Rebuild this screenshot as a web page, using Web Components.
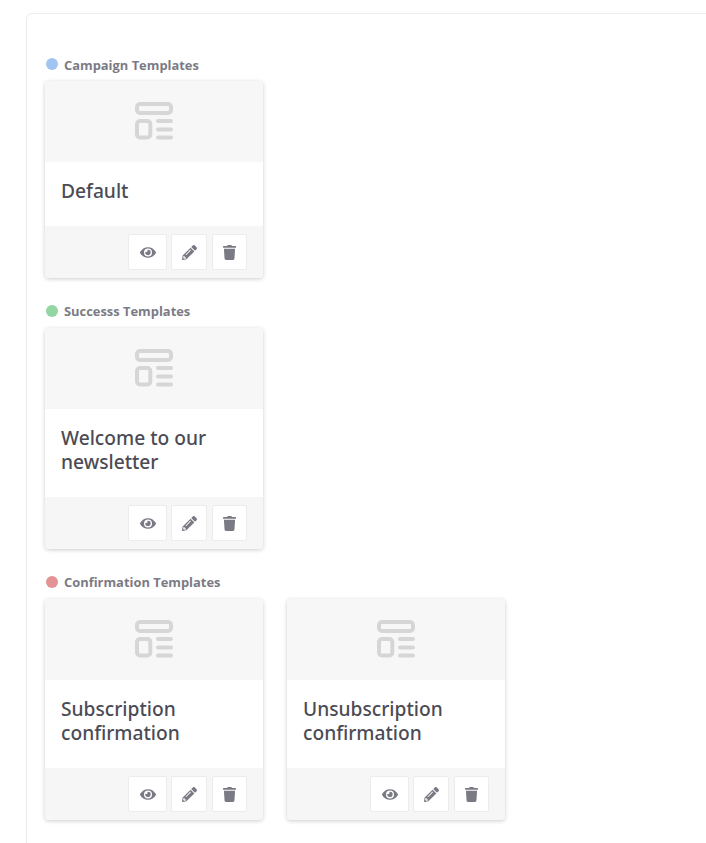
<!DOCTYPE html>
<html lang="en">
<head>
<meta charset="utf-8">
<title>Templates</title>
<style>
  html, body { margin: 0; padding: 0; background: #fff; overflow: hidden; height: 843px; }
  body { font-family: "Open Sans", "Noto Sans", "Liberation Sans", sans-serif; }
</style>
</head>
<body>
<template-panel>
  <template-section label="Campaign Templates" color="#a1c5f0">
    <template-card>Default</template-card>
  </template-section>
  <template-section label="Successs Templates" color="#93d6a3">
    <template-card>Welcome to our newsletter</template-card>
  </template-section>
  <template-section label="Confirmation Templates" color="#e39393">
    <template-card>Subscription confirmation</template-card>
    <template-card>Unsubscription confirmation</template-card>
  </template-section>
</template-panel>

<script>
const icons = {
  eye: { box: "0 0 576 512", w: 16, d: "M572.52 241.4C518.29 135.59 410.93 64 288 64S57.68 135.64 3.48 241.41a32.35 32.35 0 0 0 0 29.19C57.71 376.41 165.07 448 288 448s230.32-71.64 284.52-177.41a32.35 32.35 0 0 0 0-29.19zM288 400a144 144 0 1 1 144-144 143.93 143.93 0 0 1-144 144zm0-240a95.31 95.31 0 0 0-25.31 3.79 47.85 47.85 0 0 1-66.9 66.9A95.78 95.78 0 1 0 288 160z" },
  pencil: { box: "0 0 512 512", w: 15, d: "M497.9 142.1l-46.1 46.1c-4.7 4.7-12.3 4.7-17 0l-111-111c-4.7-4.7-4.7-12.3 0-17l46.1-46.1c18.7-18.7 49.1-18.7 67.9 0l60.1 60.1c18.8 18.7 18.8 49.1 0 67.9zM284.2 99.8L21.6 362.4.4 483.9c-2.9 16.4 11.4 30.6 27.8 27.8l121.5-21.3 262.6-262.6c4.7-4.7 4.7-12.3 0-17l-111-111c-4.8-4.7-12.4-4.7-17.1 0zM124.1 339.9c-5.5-5.5-5.5-14.3 0-19.8l154-154c5.5-5.5 14.3-5.5 19.8 0s5.5 14.3 0 19.8l-154 154c-5.5 5.5-14.3 5.5-19.8 0zM88 424h48v36.3l-64.5 11.3-31.1-31.1L51.7 376H88v48z" },
  trash: { box: "0 0 448 512", w: 13, d: "M432 32H312l-9.4-18.7A24 24 0 0 0 281.1 0H166.8a23.72 23.72 0 0 0-21.4 13.3L136 32H16A16 16 0 0 0 0 48v32a16 16 0 0 0 16 16h416a16 16 0 0 0 16-16V48a16 16 0 0 0-16-16zM53.2 467a48 48 0 0 0 47.9 45h245.8a48 48 0 0 0 47.9-45L416 128H32z" },
}

class TemplatePanel extends HTMLElement {
  constructor() {
    super()
    this.attachShadow({ mode: "open" })
    this.shadowRoot.innerHTML = /*html*/`
      <style>
        :host {
          display: block;
          box-sizing: border-box;
          margin: 13px 0 0 26px;
          width: 800px;
          height: 900px;
          padding: 43px 0 0 18px;
          border: 1px solid #ececec;
          border-radius: 6px;
          background: #fff;
        }
      </style>
      <slot></slot>
    `
  }
}

class TemplateSection extends HTMLElement {
  constructor() {
    super()
    this.attachShadow({ mode: "open" })
    this.shadowRoot.innerHTML = /*html*/`
      <style>
        :host { display: block; margin-bottom: 25px; }
        .heading {
          display: flex;
          align-items: center;
          height: 16px;
          margin-bottom: 9px;
          font-size: 12.9px;
          font-weight: 700;
          color: #7b7b85;
        }
        .dot {
          width: 12px;
          height: 12px;
          margin: 0 6px 0 1px;
          border-radius: 50%;
          background: var(--dot);
        }
        /* the first heading sits a pixel closer to its card */
        :host(:first-child) .heading { margin-bottom: 8px; }
        :host(:first-child) .dot { margin-top: -2px; }
        .cards { display: flex; gap: 24px; align-items: flex-start; }
      </style>
      <div class="heading"><span class="dot"></span><span class="label"></span></div>
      <div class="cards"><slot></slot></div>
    `
    this.shadowRoot.querySelector('.label').textContent = this.getAttribute('label')
    this.style.setProperty('--dot', this.getAttribute('color'))
  }
}

class TemplateCard extends HTMLElement {
  constructor() {
    super()
    this.attachShadow({ mode: "open" })
    this.shadowRoot.innerHTML = /*html*/`
      <style>
        :host {
          display: block;
          width: 218px;
          border-radius: 4px;
          overflow: hidden;
          background: #f6f6f6;
          box-shadow: 0 1px 4px rgba(0, 0, 0, .2);
        }
        .thumb {
          display: flex;
          justify-content: center;
          align-items: center;
          height: 81px;
          background: #f7f7f7;
        }
        .thumb svg { display: block; margin-top: -1px; }
        .body {
          padding: 17px 16px 23px;
          background: #fff;
          font-family: "Noto Sans", "Open Sans", sans-serif;
          font-size: 19.2px;
          line-height: 24px;
          font-weight: 500;
          color: #4b4b55;
        }
        .footer {
          display: flex;
          justify-content: flex-end;
          gap: 4px;
          height: 52px;
          box-sizing: border-box;
          padding: 8px 16px;
          background: #f6f6f6;
        }
        card-action[icon="trash"] { margin-left: 1px; }
      </style>
      <div class="thumb">
        <svg width="38" height="38" viewBox="0 0 38 38" fill="none" stroke="#d6d6d6" stroke-width="4">
          <rect x="2" y="2" width="34" height="9" rx="3"/>
          <rect x="2" y="19" width="13.3" height="16.5" rx="3"/>
          <path stroke-linecap="round" d="M23 19H36M23 27.5H36M23 35.5H36"/>
        </svg>
      </div>
      <div class="body"><slot></slot></div>
      <div class="footer">
        <card-action icon="eye" width="39"></card-action>
        <card-action icon="pencil" width="36"></card-action>
        <card-action icon="trash" width="35"></card-action>
      </div>
    `
  }
}

class CardAction extends HTMLElement {
  constructor() {
    super()
    this.attachShadow({ mode: "open" })
    const icon = icons[this.getAttribute('icon')]
    this.shadowRoot.innerHTML = /*html*/`
      <style>
        :host {
          display: flex;
          justify-content: center;
          align-items: center;
          box-sizing: border-box;
          width: ${this.getAttribute('width')}px;
          height: 36px;
          border: 1px solid #ececec;
          border-radius: 2px;
          background: #fff;
        }
        svg { display: block; fill: #7a7a85; }
      </style>
      <svg width="${icon.w}" height="15" viewBox="${icon.box}"><path d="${icon.d}"/></svg>
    `
  }
}

customElements.define('template-panel', TemplatePanel)
customElements.define('template-section', TemplateSection)
customElements.define('template-card', TemplateCard)
customElements.define('card-action', CardAction)
</script>
</body>
</html>
